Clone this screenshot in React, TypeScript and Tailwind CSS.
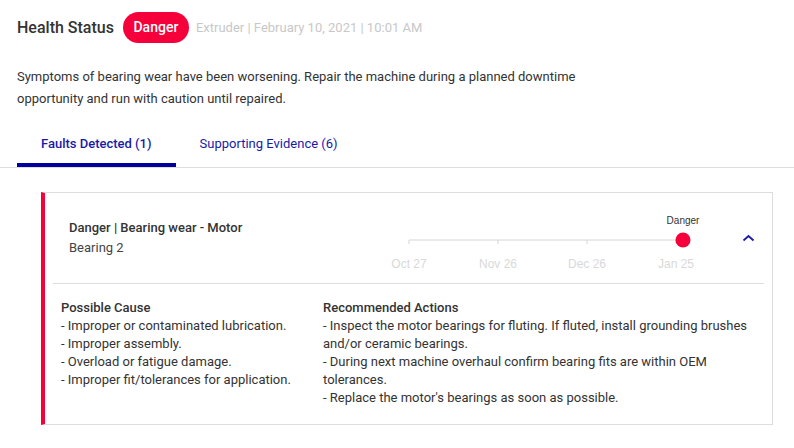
import React, { useState } from 'react';

const causes = [
  '- Improper or contaminated lubrication.',
  '- Improper assembly.',
  '- Overload or fatigue damage.',
  '- Improper fit/tolerances for application.',
];

const actions = [
  '- Inspect the motor bearings for fluting. If fluted, install grounding brushes and/or ceramic bearings.',
  '- During next machine overhaul confirm bearing fits are within OEM tolerances.',
  "- Replace the motor's bearings as soon as possible.",
];

const ticks = [
  { x: 29, label: 'Oct 27' },
  { x: 118, label: 'Nov 26' },
  { x: 207, label: 'Dec 26' },
  { x: 296, label: 'Jan 25' },
];

function Timeline() {
  return (
    <svg width="330" height="70" viewBox="0 0 330 70" className="shrink-0 overflow-visible">
      <line x1="29" y1="37" x2="303" y2="37" stroke="#d6d6d6" strokeWidth="1" />
      {ticks.map((t) => (
        <g key={t.label}>
          <line x1={t.x} y1="37" x2={t.x} y2="41" stroke="#d6d6d6" strokeWidth="1" />
          <text
            x={t.x}
            y="65"
            textAnchor="middle"
            fontSize="12"
            fill="#d9d9d9"
            fontFamily="'Liberation Sans', Arial, sans-serif"
          >
            {t.label}
          </text>
        </g>
      ))}
      <text
        x="303"
        y="21"
        textAnchor="middle"
        fontSize="10"
        fill="#333"
        fontFamily="'Liberation Sans', Arial, sans-serif"
      >
        Danger
      </text>
      <circle cx="303" cy="37" r="7.5" fill="#f5003a" />
    </svg>
  );
}

export default function App() {
  const [tab, setTab] = useState(0);
  const [open, setOpen] = useState(true);

  return (
    <div className="w-[794px] h-[448px] bg-white text-[#333] overflow-hidden" style={{ fontFamily: 'Roboto, "Noto Sans", sans-serif' }}>
      {/* Header */}
      <div className="flex items-center pl-[17px] pt-3">
        <h1 className="text-[16px] font-medium text-[#333]">Health Status</h1>
        <span className="ml-[9px] h-[31px] w-[66px] rounded-full bg-[#f5003a] text-white text-[14px] font-medium flex items-center justify-center">
          Danger
        </span>
        <span className="ml-[7px] text-[13px] text-[#c8c8c8]">Extruder | February 10, 2021 | 10:01 AM</span>
      </div>

      <p className="mt-[23px] ml-[17px] w-[600px] text-[13px] leading-[22px] text-[#333]">
        Symptoms of bearing wear have been worsening. Repair the machine during a planned downtime opportunity and run with caution until repaired.
      </p>

      {/* Tabs */}
      <div className="mt-3 border-b border-[#dddddd] flex pl-[17px]">
        {['Faults Detected (1)', 'Supporting Evidence (6)'].map((label, idx) => (
          <button
            key={label}
            onClick={() => setTab(idx)}
            className={`px-6 pt-3 pb-[9px] text-[13px] leading-5 text-[#1a1aa6] border-b-4 ${
              tab === idx ? 'border-[#00009c] font-medium' : 'border-transparent'
            }`}
          >
            {label}
          </button>
        ))}
      </div>

      {/* Fault card */}
      <div className="mt-6 ml-[41px] mr-[21px] border border-[#dddddd] border-l-4 border-l-[#f5003a]">
        <div className="flex items-center h-[90px] pl-6">
          <div className="flex-1 text-[13px] leading-5">
            <div className="font-medium text-[#333]">Danger | Bearing wear - Motor</div>
            <div className="text-[#444]">Bearing 2</div>
          </div>
          <Timeline />
          <button
            onClick={() => setOpen(!open)}
            className="ml-[26px] mr-3 w-6 h-6 flex items-center justify-center"
            aria-label="Collapse"
          >
            <svg width="13" height="8" viewBox="0 0 13 8">
              <path d="M1.5 6.5 L6.5 2 L11.5 6.5" fill="none" stroke="#1a1aa6" strokeWidth="1.8" />
            </svg>
          </button>
        </div>
        {open && (
          <>
            <div className="mx-2 h-px bg-[#dddddd]" />
            <div className="grid grid-cols-[262px_1fr] pl-4 pr-5 pt-[15px] pb-[17px] text-[13px] leading-[18px] text-[#333]">
              <div>
                <div className="font-medium">Possible Cause</div>
                {causes.map((c) => (
                  <div key={c}>{c}</div>
                ))}
              </div>
              <div>
                <div className="font-medium">Recommended Actions</div>
                {actions.map((a) => (
                  <div key={a}>{a}</div>
                ))}
              </div>
            </div>
          </>
        )}
      </div>
    </div>
  );
}
